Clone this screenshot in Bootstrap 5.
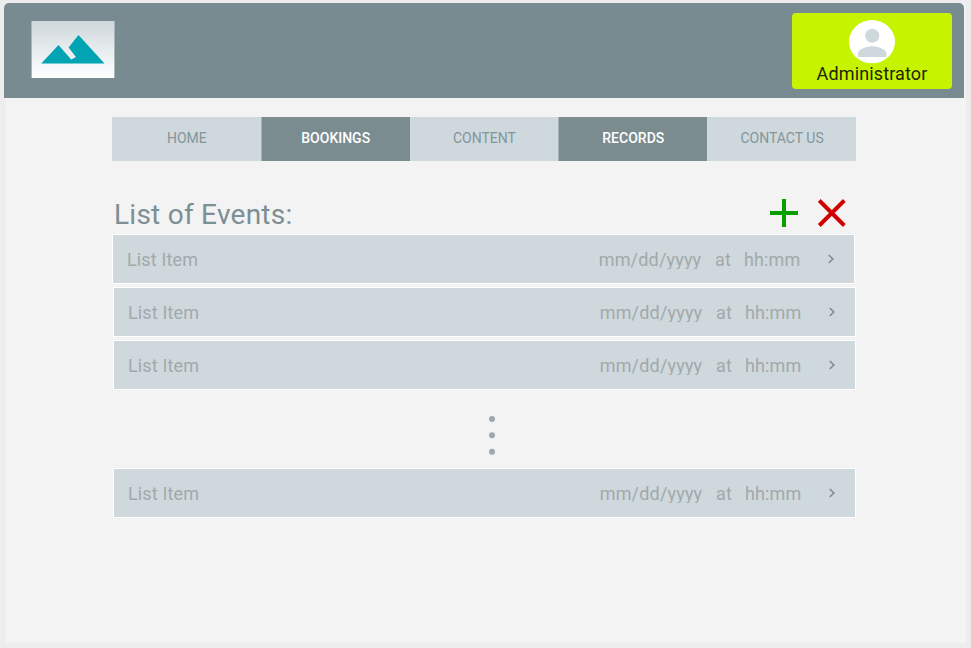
<!DOCTYPE html>
<html lang="en">
<head>
<meta charset="utf-8">
<meta name="viewport" content="width=device-width, initial-scale=1">
<title>List of Events</title>
<link href="https://cdn.jsdelivr.net/npm/bootstrap@5.3.0/dist/css/bootstrap.min.css" rel="stylesheet">
<style>
body{background:#ededed;font-family:Roboto,"Liberation Sans",sans-serif;height:648px;overflow:hidden}
.page-panel{width:960px;height:640px;margin:3px 0 0 6px;background:#f3f3f3}
.top-bar{height:95px;width:960px;margin-left:-2px;padding:10px 12px 9px 27px;background:#788b90;border-radius:5px 5px 0 0}
.logo{width:84px;height:57px;margin-top:8px;background:linear-gradient(#cfd8dc,#fff);border:solid #a9b5b9;border-width:0 1px}
.admin-btn{width:160px;height:76px;padding:7px 0 0;background:#c6f400;border-radius:4px;font-size:18px;line-height:20px;letter-spacing:.13px;color:#1c2500;border:0}
.main-col{width:744px;margin-left:106px}
.tabs{height:44px;margin-top:19px}
.tabs a{font-size:14px;line-height:16px;letter-spacing:0;padding:13px 0 0 1px;color:#83959a;background:#cfd8dd;border-radius:0}
.tabs a.on{color:#fff;background:#7b8c91;font-weight:500;box-shadow:inset 1px 0 #a5b2b7}
.heading-row{height:73px;padding:37px 9px 0 2px}
.heading-row h1{font-size:28px;line-height:33px;letter-spacing:.25px;color:#7c8f94;font-weight:400}
.event{width:743px;height:50px;margin:0 0 3px 1px;padding:0 18px 0 14px;background:#cfd8dd;border:1px solid #fff;font-size:18px;line-height:22px;letter-spacing:.14px;color:#a2a9aa}
.event:first-child{margin-left:0}
.event span{height:22px;padding-top:1px;overflow:hidden}
.event .day{width:117px;height:21px;margin-bottom:1px;padding-left:.7px;letter-spacing:.18px}
.event .at{width:29px}
.event .hour{width:82px}
.dots{height:78px;padding:0 0 0 376px}
</style>
<script src="https://cdn.jsdelivr.net/npm/bootstrap@5.3.0/dist/js/bootstrap.bundle.min.js"></script>
</head>
<body>
<div class="page-panel">
  <header class="top-bar d-flex justify-content-between align-items-start">
    <a class="logo d-block" href="#" aria-label="Home"><svg class="d-block" width="82" height="57"><path d="M9.2 42.6 26.5 24 39.2 38.4l4.8-2.3-7.4-9.6L46.5 14 72.5 42.6Z" fill="#00a4b3"/></svg></a>
    <button class="admin-btn d-flex flex-column align-items-center" type="button">
      <svg class="flex-shrink-0" width="46" height="43.5" viewBox="0 0 46 43.5"><ellipse cx="23" cy="21.7" rx="23" ry="21.6" fill="#fff"/><ellipse cx="23.2" cy="15.7" rx="7.1" ry="7" fill="#cfd8dd"/><path d="M9 37v-3.5c0-4.7 9.4-7.3 14.2-7.3s14.2 2.6 14.2 7.3V37Z" fill="#cfd8dd"/></svg>
      <span>Administrator</span>
    </button>
  </header>
  <main class="main-col">
    <nav class="tabs d-flex text-center">
      <a class="nav-link flex-fill w-100" href="#">HOME</a>
      <a class="nav-link flex-fill w-100 on" href="#">BOOKINGS</a>
      <a class="nav-link flex-fill w-100" href="#">CONTENT</a>
      <a class="nav-link flex-fill w-100 on" href="#">RECORDS</a>
      <a class="nav-link flex-fill w-100" href="#">CONTACT US</a>
    </nav>
    <div class="heading-row d-flex justify-content-between align-items-start">
      <h1 class="m-0">List of Events:</h1>
      <div class="d-flex">
        <svg class="me-3" width="32" height="32"><path d="M3 15h28M17 1v28" stroke="#0a9f00" stroke-width="4"/></svg>
        <svg width="32" height="32"><path d="m4.3 2.5 25 25M29.3 2.5l-25 25" stroke="#d10000" stroke-width="3.9"/></svg>
      </div>
    </div>
    <div>
      <div class="event d-flex align-items-center"><span class="me-auto">List Item</span><span class="day">mm/dd/yyyy</span><span class="at">at</span><span class="hour">hh:mm</span><svg class="chev" width="10" height="12"><path d="m2.8 2 4 4-4 4" fill="none" stroke="#868a8a" stroke-width="1.6"/></svg></div>
      <div class="event d-flex align-items-center"><span class="me-auto">List Item</span><span class="day">mm/dd/yyyy</span><span class="at">at</span><span class="hour">hh:mm</span><svg class="chev" width="10" height="12"><path d="m2.8 2 4 4-4 4" fill="none" stroke="#868a8a" stroke-width="1.6"/></svg></div>
      <div class="event d-flex align-items-center mb-0"><span class="me-auto">List Item</span><span class="day">mm/dd/yyyy</span><span class="at">at</span><span class="hour">hh:mm</span><svg class="chev" width="10" height="12"><path d="m2.8 2 4 4-4 4" fill="none" stroke="#868a8a" stroke-width="1.6"/></svg></div>
      <div class="dots"><svg class="d-block" width="8" height="78" fill="#9ea8ad"><circle cx="4" cy="29" r="3"/><circle cx="4" cy="45.3" r="3"/><circle cx="4" cy="61.7" r="3"/></svg></div>
      <div class="event d-flex align-items-center"><span class="me-auto">List Item</span><span class="day">mm/dd/yyyy</span><span class="at">at</span><span class="hour">hh:mm</span><svg class="chev" width="10" height="12"><path d="m2.8 2 4 4-4 4" fill="none" stroke="#868a8a" stroke-width="1.6"/></svg></div>
    </div>
  </main>
</div>
</body>
</html>
